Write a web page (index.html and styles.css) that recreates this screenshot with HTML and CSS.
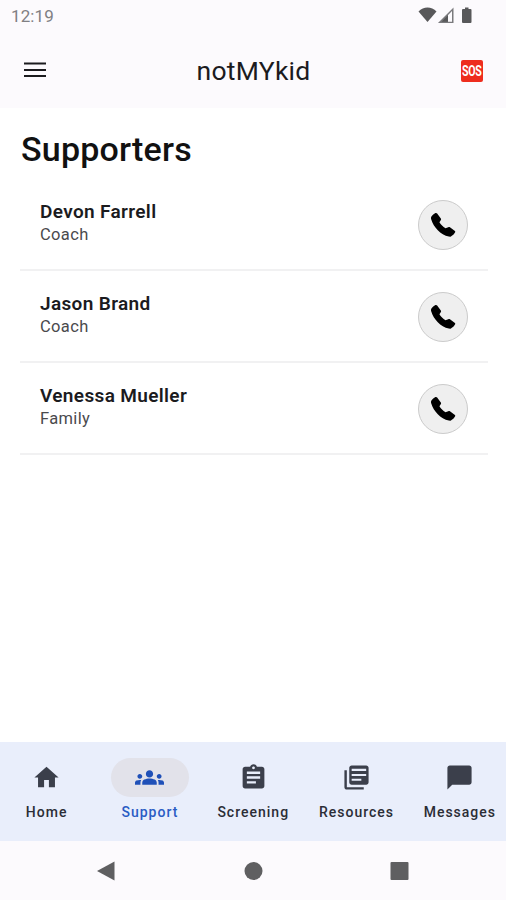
FILE: index.html
```
<!DOCTYPE html>
<html lang="en">
<head>
	<meta charset="UTF-8">
	<meta name="viewport" content="width=device-width, initial-scale=1">
	<title>notMYkid</title>
	<link rel="stylesheet" href="styles.css">
</head>
<body>
<div class="screen">
	<!-- status bar -->
	<div class="status">
		<span class="clock">12:19</span>
		<svg class="status-icons" width="56" height="18" viewBox="0 0 56 18">
			<path d="M.5 4.500C5.500-.8 13.500-.8 18.500 4.500L9.500 15z" fill="#58585a"/>
			<path d="M30 7V16H20.500z" fill="#58585a"/>
			<path d="M35.500.500V16H20zM34 4L23.500 14.700H34z" fill="#7a7a7d" fill-rule="evenodd"/>
			<path d="M47 .5h3.500v1.500h2q1 0 1 1V15q0 1-1 1h-7.500q-1 0-1-1V3q0-1 1-1H47z" fill="#58585a"/>
		</svg>
	</div>

	<!-- top bar -->
	<header class="topbar">
		<button class="menu-btn" aria-label="Menu">
			<svg width="24" height="18" viewBox="0 0 24 18">
				<path d="M1 2.500h22M1 9h22M1 15h22" stroke="#1b1b1e" stroke-width="2.200"/>
			</svg>
		</button>
		<h1 class="brand">notMYkid</h1>
		<button class="sos" aria-label="SOS"><span>SOS</span></button>
	</header>

	<!-- list of supporters -->
	<main class="content">
		<h2 class="title">Supporters</h2>
		<ul class="list">
			<li class="row">
				<div class="person">
					<span class="name">Devon Farrell</span>
					<span class="role">Coach</span>
				</div>
				<button class="call" aria-label="Call"><svg class="phone" viewBox="0 0 24 24"><use href="#phone"/></svg></button>
			</li>
			<li class="row">
				<div class="person">
					<span class="name">Jason Brand</span>
					<span class="role">Coach</span>
				</div>
				<button class="call" aria-label="Call"><svg class="phone" viewBox="0 0 24 24"><use href="#phone"/></svg></button>
			</li>
			<li class="row">
				<div class="person">
					<span class="name">Venessa Mueller</span>
					<span class="role">Family</span>
				</div>
				<button class="call" aria-label="Call"><svg class="phone" viewBox="0 0 24 24"><use href="#phone"/></svg></button>
			</li>
		</ul>
	</main>

	<!-- tabs -->
	<nav class="tabs">
		<a class="tab">
			<span class="pill"><svg class="icon" viewBox="0 0 24 24"><path d="M10 20v-6h4v6h5v-8h3L12 3 2 12h3v8z"/></svg></span>
			<span class="label">Home</span>
		</a>
		<a class="tab active">
			<span class="pill"><svg class="icon" viewBox="0 0 24 24"><path d="M12 12.750c1.630 0 3.070.39 4.240.9 1.080.48 1.760 1.560 1.760 2.730V18H6v-1.610c0-1.180.68-2.260 1.760-2.730 1.170-.52 2.610-.91 4.240-.91zM4 13c1.100 0 2-.9 2-2s-.9-2-2-2-2 .9-2 2 .9 2 2 2zm1.130 1.100C4.760 14.040 4.390 14 4 14c-.99 0-1.930.21-2.780.58C.48 14.900 0 15.620 0 16.430V18h4.500v-1.610c0-.83.23-1.610.63-2.290zM20 13c1.100 0 2-.9 2-2s-.9-2-2-2-2 .9-2 2 .9 2 2 2zm4 3.430c0-.81-.48-1.530-1.220-1.850C21.930 14.210 20.990 14 20 14c-.39 0-.76.04-1.130.1.4.68.63 1.460.63 2.290V18H24zM12 6c1.660 0 3 1.340 3 3s-1.340 3-3 3-3-1.340-3-3 1.340-3 3-3z"/></svg></span>
			<span class="label">Support</span>
		</a>
		<a class="tab">
			<span class="pill"><svg class="icon" viewBox="0 0 24 24"><path fill-rule="evenodd" d="M19 3h-4.180C14.400 1.840 13.300 1 12 1s-2.400.84-2.820 2H5c-1.100 0-2 .9-2 2v14c0 1.100.9 2 2 2h14c1.100 0 2-.9 2-2V5c0-1.100-.9-2-2-2zm-7-.2c.66 0 1.200.54 1.200 1.200s-.54 1.200-1.200 1.200-1.200-.54-1.200-1.200.54-1.200 1.200-1.200zM6.500 7h11v2h-11zM6.500 11h11v2h-11zM6.500 15h7.500v2H6.500z"/></svg></span>
			<span class="label">Screening</span>
		</a>
		<a class="tab">
			<span class="pill"><svg class="icon" viewBox="0 0 24 24"><path fill-rule="evenodd" d="M4 6H2v14c0 1.100.9 2 2 2h14v-2H4zM20 2H8c-1.100 0-2 .9-2 2v12c0 1.100.9 2 2 2h12c1.100 0 2-.9 2-2V4c0-1.100-.9-2-2-2zM8 4.800h12v1.800H8zM8 9h12v1.700H8zM8 13h8v1.700H8z"/></svg></span>
			<span class="label">Resources</span>
		</a>
		<a class="tab">
			<span class="pill"><svg class="icon" viewBox="0 0 24 24"><path d="M20 2H4c-1.100 0-2 .9-2 2v18l4-4h14c1.100 0 2-.9 2-2V4c0-1.100-.9-2-2-2z"/></svg></span>
			<span class="label">Messages</span>
		</a>
	</nav>

	<!-- android buttons -->
	<div class="sysnav">
		<svg width="20" height="20" viewBox="0 0 20 20"><path d="M1 10L18.500 .5v19z"/></svg>
		<svg width="20" height="20" viewBox="0 0 20 20"><circle cx="10.500" cy="10" r="9"/></svg>
		<svg width="20" height="20" viewBox="0 0 20 20"><rect x="1.500" y="1" width="18" height="18" rx="1"/></svg>
	</div>
</div>

<svg class="defs" width="0" height="0">
	<symbol id="phone" viewBox="0 0 24 24">
		<path d="M1.300 4.200C2.300 2.900 3.600 1.700 5 1c.6-.3 1.200-.1 1.600.4L10 5.900c.4.500.3 1.100-.1 1.600L8.700 9.500c1.300 2.200 3.300 4.200 5.600 5.600l2.600-1.100c.5-.2 1-.2 1.500.1l4.300 3.100c.6.400.8 1 .5 1.600-.9 1.600-2.200 3-3.900 3.800-.6.300-1.300.3-1.900.1C9.600 20.700 3.500 14.500 1 6.400c-.2-.8-.2-1.500.3-2.200z"/>
	</symbol>
</svg>
</body>
</html>
```
FILE: styles.css
```
*{margin:0;padding:0;box-sizing:border-box;}
body{
	background:#fff;
	font-family:Roboto, "Liberation Sans", sans-serif;
	color:#1b1b1e;
}
button{
	border:0;
	background:none;
	font-family:inherit;
}
.defs{
	display:block;
}

.screen{
	display:flex;
	flex-direction:column;
	height:900px;
	overflow:hidden;
}

/* status bar */
.status{
	display:flex;
	justify-content:space-between;
	height:32px;
	padding:7px 32px 0 11px;
	background:#fcfafd;
}
.clock{
	font-size:17px;
	line-height:18px;
	letter-spacing:0.1px;
	color:#807f83;
}

/* top bar */
.topbar{
	display:grid;
	grid-template-columns:1fr auto 1fr;
	align-items:center;
	height:76px;
	padding:0 23px;
	background:#fcfafd;
}
.menu-btn{
	justify-self:start;
	height:18px;
}
.brand{
	padding:2px 0 0 1px;
	font-size:26.5px;
	font-weight:400;
	line-height:32px;
	letter-spacing:0.25px;
}
.sos{
	display:flex;
	align-items:center;
	justify-content:center;
	justify-self:end;
	width:22px;
	height:22px;
	margin-top:1px;
	border-radius:2px;
	background:#ee2d1e;
	color:#fff;
}
.sos span{
	font-size:14px;
	font-weight:700;
	letter-spacing:-0.5px;
	transform:scaleX(.76);
}

/* supporters */
.content{
	flex:1;
	padding:21px 18px 0 20px;
}
.title{
	font-size:34px;
	font-weight:500;
	line-height:41px;
	letter-spacing:0.2px;
	padding-left:1px;
	color:#111;
}
.list{
	list-style:none;
	padding-top:9px;
}
.row{
	display:flex;
	justify-content:space-between;
	height:92px;
	padding:21px 20px 0;
	border-bottom:2px solid #f1f1f2;
}
.person{
	display:flex;
	flex-direction:column;
}
.name{
	font-size:19px;
	font-weight:600;
	line-height:24px;
	letter-spacing:0.35px;
}
.role{
	font-size:16.5px;
	line-height:21px;
	letter-spacing:0.35px;
	color:#4a4a4d;
}
.call{
	display:flex;
	align-items:center;
	justify-content:center;
	width:50px;
	height:50px;
	border:1px solid #cbcbcb;
	border-radius:50%;
	background:#efefef;
}
.phone{
	width:26px;
	height:26px;
}

/* tabs */
.tabs{
	display:grid;
	grid-template-columns:repeat(5, 103.3px);
	height:99px;
	padding-top:16px;
	margin-left:-5px;
	background:#e9eefb;
}
.tab{
	display:flex;
	flex-direction:column;
	align-items:center;
	color:#2b2d36;
}
.pill{
	display:flex;
	align-items:center;
	justify-content:center;
	width:78px;
	height:39px;
	border-radius:20px;
}
.icon{
	width:29px;
	height:29px;
	fill:#3b3f4b;
}
.label{
	padding-top:6px;
	font-size:14px;
	font-weight:500;
	line-height:18px;
	letter-spacing:1px;
}
.active .pill{
	background:#e2e2ea;
}
.active .icon{
	fill:#1f50b8;
}
.active .label{
	color:#2a5cc4;
}

/* android buttons */
.sysnav{
	display:flex;
	align-items:center;
	justify-content:space-between;
	height:59px;
	padding:0 97px 0 96px;
	background:#fcfafd;
	fill:#5f5f61;
}
```
